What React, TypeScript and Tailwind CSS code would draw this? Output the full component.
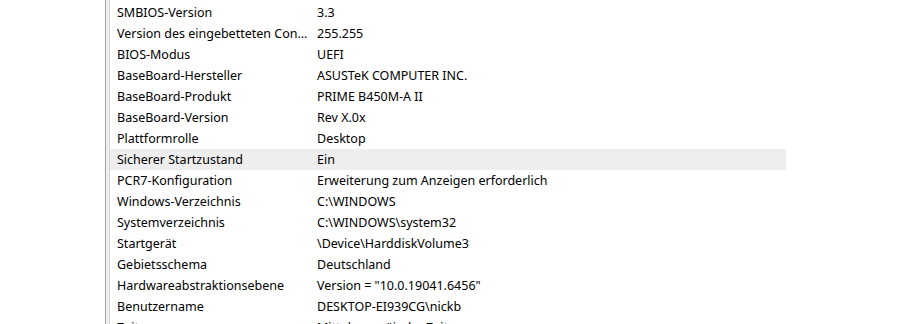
const rows: [string, string][] = [
  ["SMBIOS-Version", "3.3"],
  ["Version des eingebetteten Controllers", "255.255"],
  ["BIOS-Modus", "UEFI"],
  ["BaseBoard-Hersteller", "ASUSTeK COMPUTER INC."],
  ["BaseBoard-Produkt", "PRIME B450M-A II"],
  ["BaseBoard-Version", "Rev X.0x"],
  ["Plattformrolle", "Desktop"],
  ["Sicherer Startzustand", "Ein"],
  ["PCR7-Konfiguration", "Erweiterung zum Anzeigen erforderlich"],
  ["Windows-Verzeichnis", "C:\\WINDOWS"],
  ["Systemverzeichnis", "C:\\WINDOWS\\system32"],
  ["Startgerät", "\\Device\\HarddiskVolume3"],
  ["Gebietsschema", "Deutschland"],
  ["Hardwareabstraktionsebene", 'Version = "10.0.19041.6456"'],
  ["Benutzername", "DESKTOP-EI939CG\\nickb"],
  ["Zeitzone", "Mitteleuropäische Zeit"],
];

export default function App() {
  return (
    <div className="flex h-[324px] w-[917px] overflow-hidden bg-white font-['Noto_Sans',sans-serif] text-[12.5px] text-[#000]">
      {/* tree pane */}
      <div className="w-[105px] shrink-0 bg-white" />
      {/* splitter */}
      <div className="w-px shrink-0 bg-[#a0a0a0]" />
      <div className="w-[3px] shrink-0 bg-[#f0f0f0]" />
      <div className="w-px shrink-0 bg-[#d4d4d4]" />

      {/* list view */}
      <div className="flex flex-col pt-[2px]">
        {rows.map(([k, v], i) => (
          <div
            key={k}
            className={`flex h-[21px] w-[676px] shrink-0 items-center pt-[2px] ${
              i === 7 ? "bg-[#eeeeee]" : ""
            }`}
          >
            <div className="w-[206px] shrink-0 truncate pl-[7px] pr-[6px]">{k}</div>
            <div className="whitespace-nowrap pl-px">{v}</div>
          </div>
        ))}
      </div>
    </div>
  );
}
